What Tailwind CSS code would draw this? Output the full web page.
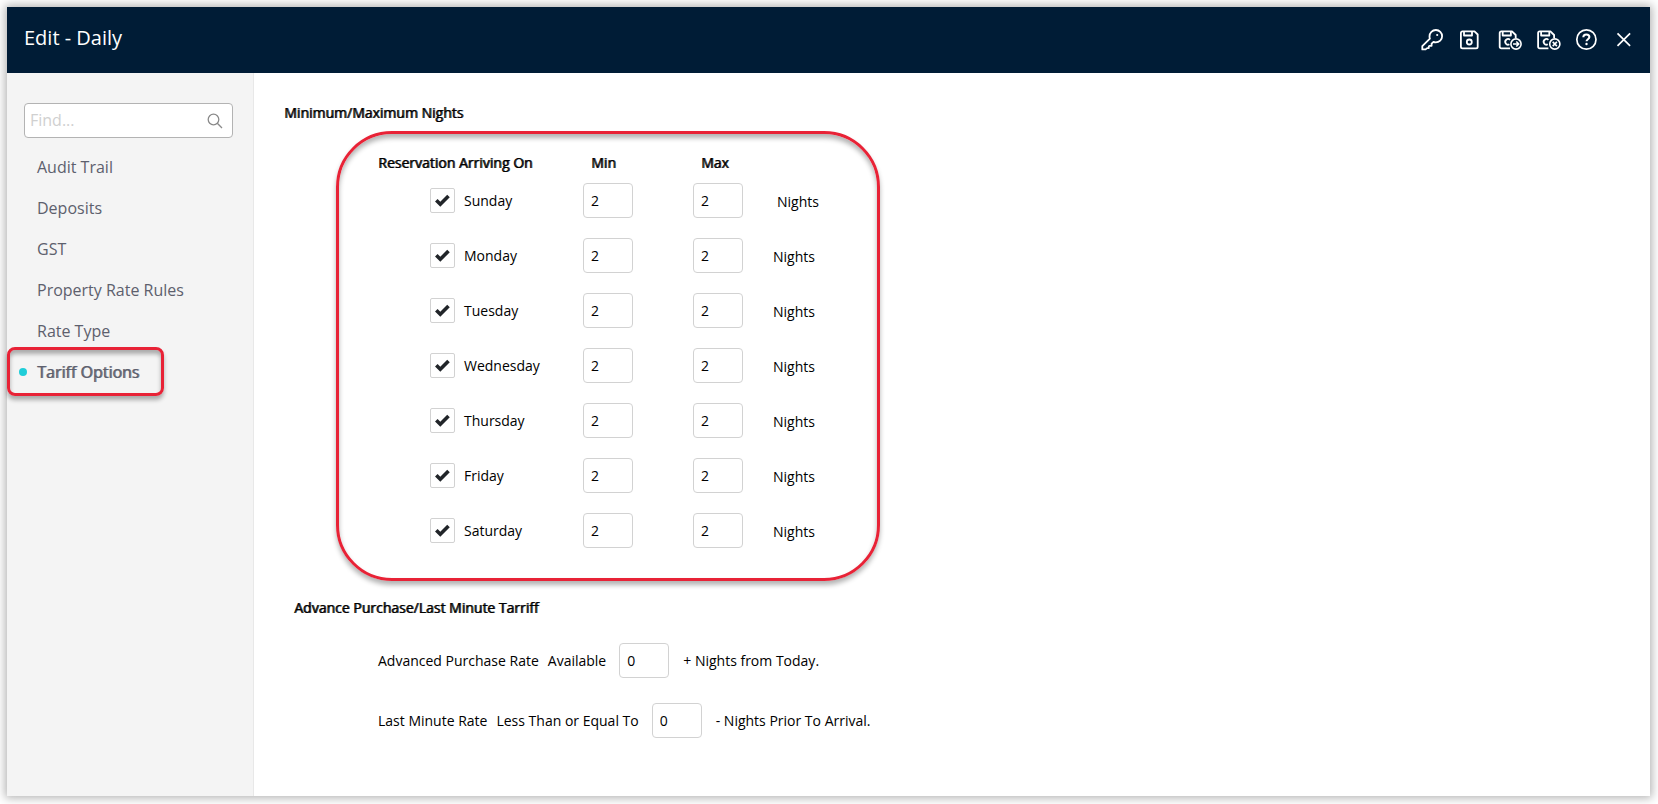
<!DOCTYPE html>
<html lang="en">
<head>
    <meta charset="UTF-8" />
    <title>Edit - Daily</title>
    <meta name="viewport" content="width=device-width, initial-scale=1.0">
    <script src="https://cdn.jsdelivr.net/npm/@tailwindcss/browser@4"></script>
</head>
<body class="bg-white font-['Open_Sans',sans-serif] text-sm text-black">
    <div class="min-h-screen flex pt-[7px] pl-[7px] pr-2 pb-2">
        <div class="flex-1 flex flex-col bg-white shadow-[0_0_9px_2px_rgba(0,0,0,0.3)]">

            <!-- Header -->
            <header class="h-[66px] shrink-0 bg-[#001c36] text-white pl-[17px] pr-3 flex items-center justify-between">
                <h1 class="text-xl pb-1">Edit - Daily</h1>
                <div class="flex gap-[10px]">
                    <button type="button" aria-label="Security" class="size-7 cursor-pointer">
                        <svg viewBox="0 0 28 28" class="size-7" fill="none" stroke="currentColor" stroke-width="1.8" stroke-linejoin="round">
                            <path d="M16 4a6.200 6.200 0 0 1 6.100 6.200c0 3.500-2.900 6.100-6.400 6.100-.8 0-1.500-.2-2.200-.5l-1.900 1.900v2.100H9.400l-.6.700v1.600H7.200L5.600 23.400H2.300v-3.200l7.600-7.600c-.3-.7-.4-1.500-.4-2.200C9.500 6.800 12.300 3.900 16 4z" />
                            <circle cx="17.200" cy="9" r="1.100" fill="currentColor" stroke="none" />
                        </svg>
                    </button>
                    <button type="button" aria-label="Save" class="size-7 cursor-pointer">
                        <svg viewBox="0 0 28 28" class="size-7" fill="none" stroke="currentColor" stroke-width="1.8" stroke-linejoin="round">
                            <path d="M4.500 5.300h12l3.200 3.200v12.200a1.600 1.600 0 0 1-1.600 1.600H4.500a1.600 1.600 0 0 1-1.600-1.600V6.900a1.600 1.600 0 0 1 1.600-1.600z" />
                            <path d="M6 5.300v4.200h8V5.300" />
                            <circle cx="11.300" cy="16" r="2.500" />
                        </svg>
                    </button>
                    <button type="button" aria-label="Save and continue" class="size-7 cursor-pointer">
                        <svg viewBox="0 0 28 28" class="size-7" fill="none" stroke="currentColor" stroke-width="1.8" stroke-linejoin="round">
                            <path d="M14 22.300H5.300a1.600 1.600 0 0 1-1.600-1.600V6.900a1.600 1.600 0 0 1 1.600-1.600h10.700l3.700 3.700v3" />
                            <path d="M6.700 5.300v4.200h8.200V5.300" />
                            <path d="M14 13.800a2.800 2.800 0 1 0-.6 4.500" />
                            <circle cx="20" cy="18" r="5.100" stroke-width="1.600" />
                            <path d="M17 18h5.600M20.300 15.500l2.500 2.500-2.500 2.500" stroke-width="1.600" />
                        </svg>
                    </button>
                    <button type="button" aria-label="Save and close" class="size-7 cursor-pointer">
                        <svg viewBox="0 0 28 28" class="size-7" fill="none" stroke="currentColor" stroke-width="1.8" stroke-linejoin="round">
                            <path d="M14.400 22.300H5.700a1.600 1.600 0 0 1-1.600-1.600V6.900a1.600 1.600 0 0 1 1.600-1.600h10.700l3.700 3.700v3" />
                            <path d="M7.100 5.300v4.200h8.200V5.300" />
                            <path d="M14.400 13.800a2.800 2.800 0 1 0-.6 4.500" />
                            <circle cx="20.800" cy="18" r="5.100" stroke-width="1.600" />
                            <path d="M18.700 15.900l4.200 4.200M22.900 15.900l-4.200 4.200" stroke-width="1.600" />
                        </svg>
                    </button>
                    <button type="button" aria-label="Help" class="size-7 cursor-pointer">
                        <svg viewBox="0 0 28 28" class="size-7" fill="none" stroke="currentColor" stroke-width="1.700">
                            <circle cx="14.400" cy="13.500" r="9.600" />
                            <path d="M11.300 11.300c0-1.800 1.300-2.800 3-2.800s3.100 1 3.100 2.600c0 2.100-2.900 2.100-2.900 4.200" stroke-width="2" />
                            <circle cx="14.500" cy="18" r="1.200" fill="currentColor" stroke="none" />
                        </svg>
                    </button>
                    <button type="button" aria-label="Close" class="size-7 cursor-pointer">
                        <svg viewBox="0 0 28 28" class="size-7" fill="none" stroke="currentColor" stroke-width="1.700">
                            <path d="M7.500 7.300l12.600 12.600M20.100 7.300L7.500 19.900" />
                        </svg>
                    </button>
                </div>
            </header>

            <div class="flex-1 flex">
                <!-- Sidebar -->
                <aside class="w-[247px] shrink-0 bg-[#f4f4f4] border-r border-[#e8e8e8] pt-[30px]">
                    <div class="relative ml-[17px] mr-5">
                        <input type="text" aria-label="Find" placeholder="Find..." class="w-full h-[35px] bg-white border border-[#b3b3b3] rounded pl-[5px] pr-9 pb-[2px] text-base placeholder:text-[#d0d0d0]" />
                        <svg viewBox="0 0 16 16" class="absolute right-[10px] top-[10px] size-4" fill="none" stroke="#8a8a8a" stroke-width="1.300">
                            <circle cx="6.500" cy="6.500" r="5.300" />
                            <path d="M10.300 10.300l4.700 4.700" />
                        </svg>
                    </div>

                    <nav class="pt-2 text-base text-[#5d606d]">
                        <a href="#" class="flex items-center h-[41px] pl-[30px]">Audit Trail</a>
                        <a href="#" class="flex items-center h-[41px] pl-[30px]">Deposits</a>
                        <a href="#" class="flex items-center h-[41px] pl-[30px]">GST</a>
                        <a href="#" class="flex items-center h-[41px] pl-[30px]">Property Rate Rules</a>
                        <a href="#" class="flex items-center h-[41px] pl-[30px]">Rate Type</a>
                        <!-- Active item -->
                        <a href="#" class="relative flex items-center h-[41px] pl-3 gap-[10px] [text-shadow:1px_0_0_#5d606dd0]">
                            <span class="size-2 rounded-full bg-[#1fcdd8]"></span>
                            Tariff Options
                            <span class="absolute left-0 -top-1 w-[157px] h-[49px] border-3 border-[#e82236] rounded-lg shadow-[0_4px_4px_rgba(0,0,0,0.3),inset_0_4px_4px_rgba(0,0,0,0.3)]"></span>
                        </a>
                    </nav>
                </aside>

                <!-- Tariff options -->
                <main class="flex-1 pl-[30px] pt-[30px]">
                    <h2 class="[text-shadow:1px_0_0_#000000d0]">Minimum/Maximum Nights</h2>

                    <div class="w-[544px] ml-[52px] mt-2 pl-[39px] pt-[19px] pb-5 border-3 border-[#e82236] rounded-[56px] shadow-[0_4px_5px_rgba(0,0,0,0.3),inset_0_4px_5px_rgba(0,0,0,0.3)]">
                        <table class="table-fixed w-[460px] text-left">
                            <thead>
                                <tr class="h-5 [text-shadow:1px_0_0_#000000d0]">
                                    <th scope="col" class="w-[205px] font-normal">Reservation Arriving On</th>
                                    <th scope="col" class="w-[110px] font-normal pl-2">Min</th>
                                    <th scope="col" class="w-[80px] font-normal pl-2">Max</th>
                                    <td></td>
                                </tr>
                            </thead>
                            <tbody id="nights-rows">
                                <!-- JS will populate this -->
                            </tbody>
                        </table>
                    </div>

                    <h2 class="ml-[10px] mt-[17px] [text-shadow:1px_0_0_#000000d0]">Advance Purchase/Last Minute Tarriff</h2>

                    <div class="ml-[94px] mt-[25px] flex flex-col gap-[25px]">
                        <div class="flex items-center">
                            <label for="advance-nights" class="flex gap-[9px] mr-[13px]"><span>Advanced Purchase Rate</span><span>Available</span></label>
                            <input id="advance-nights" type="text" value="0" class="w-[50px] h-[35px] border border-[#d2d2d2] rounded px-[7px]" />
                            <span class="ml-[14px]">+ Nights from Today.</span>
                        </div>
                        <div class="flex items-center">
                            <label for="last-minute-nights" class="flex gap-[9px] mr-[13px]"><span>Last Minute Rate</span><span>Less Than or Equal To</span></label>
                            <input id="last-minute-nights" type="text" value="0" class="w-[50px] h-[35px] border border-[#d2d2d2] rounded px-[7px]" />
                            <span class="ml-[14px]">- Nights Prior To Arrival.</span>
                        </div>
                    </div>
                </main>
            </div>
        </div>
    </div>

    <script>
        const days = ["Sunday", "Monday", "Tuesday", "Wednesday", "Thursday", "Friday", "Saturday"];

        document.getElementById("nights-rows").innerHTML = days.map(day => `
            <tr class="group h-[55px]">
                <td class="pl-[52px]">
                    <label class="relative flex items-center gap-[9px]">
                        <input type="checkbox" checked class="peer appearance-none size-[25px] bg-white border border-[#d2d2d2] rounded-xs" />
                        <svg viewBox="0 0 15 13" class="absolute left-[5px] w-[15px] h-[13px] hidden peer-checked:block" fill="none" stroke="#212529" stroke-width="3.600">
                            <path d="M1.300 6.300l4 4L13.500 2" />
                        </svg>
                        ${day}
                    </label>
                </td>
                <td><input type="text" value="2" aria-label="${day} minimum nights" class="block w-[50px] h-[35px] border border-[#d2d2d2] rounded px-[7px]" /></td>
                <td><input type="text" value="2" aria-label="${day} maximum nights" class="block w-[50px] h-[35px] border border-[#d2d2d2] rounded px-[7px]" /></td>
                <td class="pt-[2px] group-first:pl-1">Nights</td>
            </tr>`).join("");
    </script>
</body>
</html>
